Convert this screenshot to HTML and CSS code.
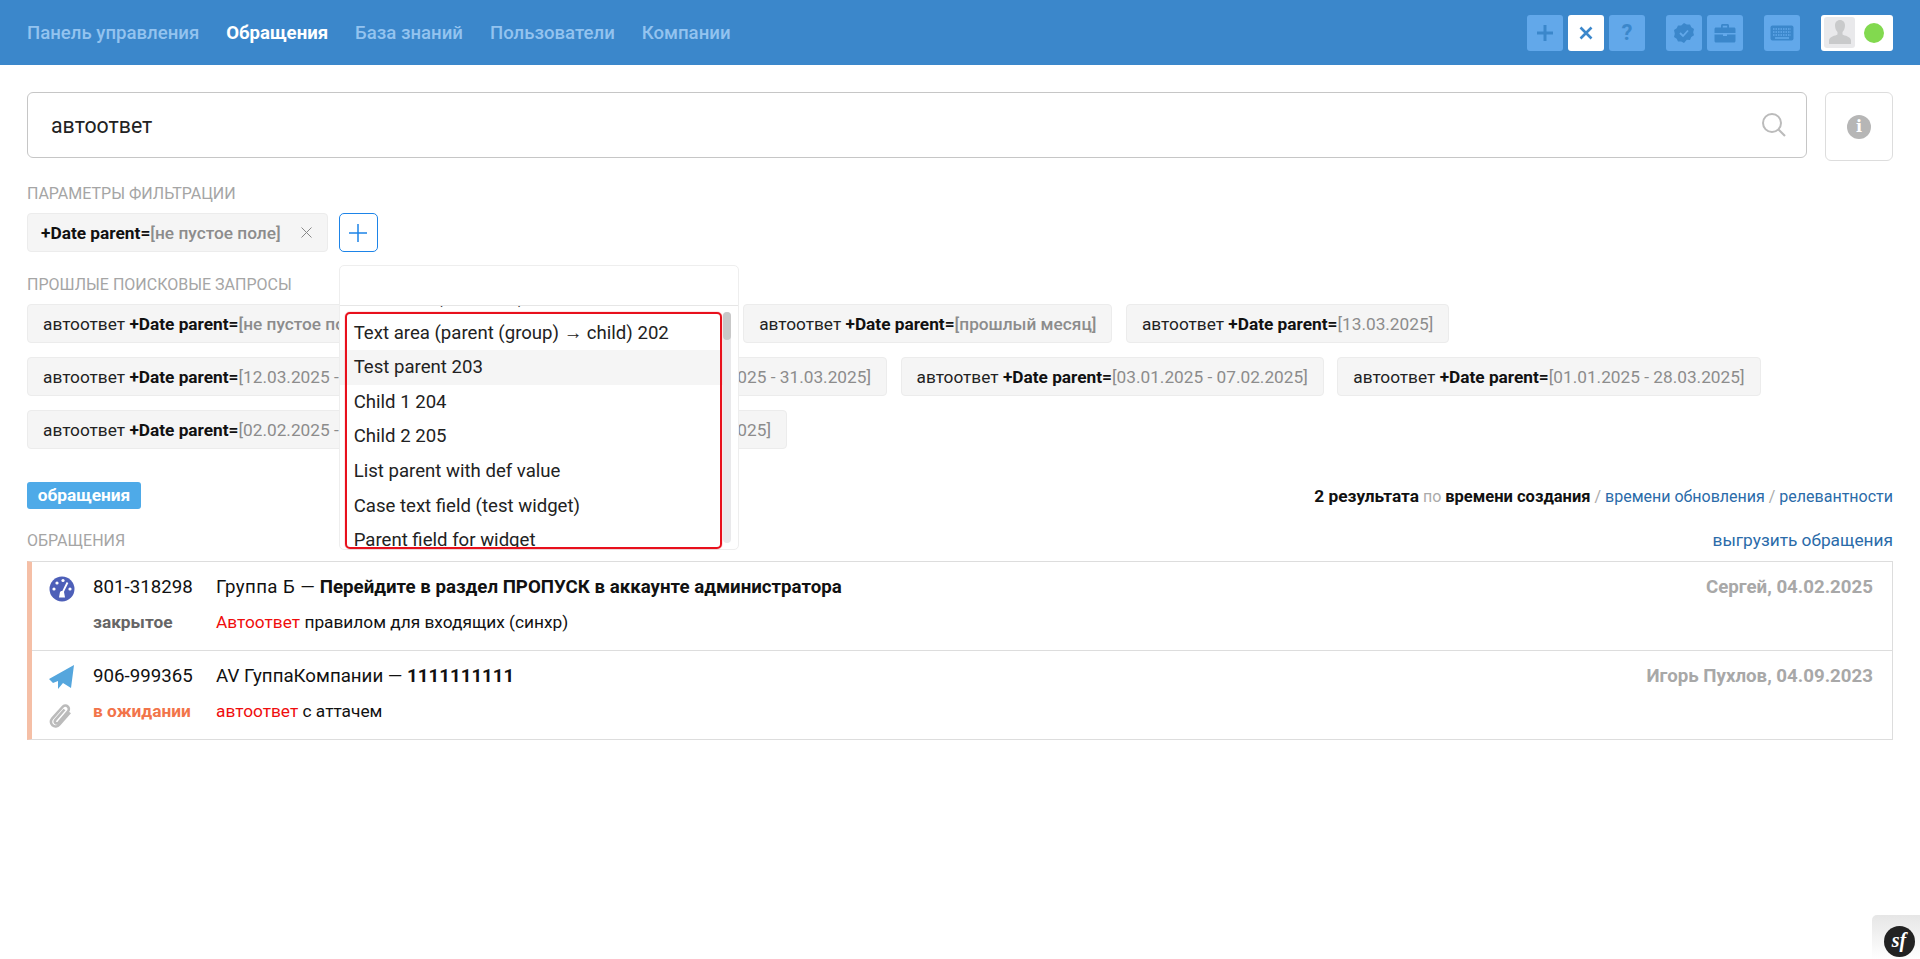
FILE: index.html
```html
<!DOCTYPE html>
<html lang="ru">
<head>
<meta charset="utf-8">
<title>Обращения</title>
<link rel="stylesheet" href="styles.css">
</head>
<body>
<header class="topbar">
  <nav class="nav">
    <a class="nav-link">Панель управления</a>
    <a class="nav-link active">Обращения</a>
    <a class="nav-link">База знаний</a>
    <a class="nav-link">Пользователи</a>
    <a class="nav-link">Компании</a>
  </nav>
  <div class="tools">
    <div class="tool-group">
      <span class="tool"><svg width="18" height="18" viewBox="0 0 18 18"><path d="M9 1v16M1 9h16" stroke="#3b87cb" stroke-width="3"/></svg></span>
      <span class="tool tool-on"><svg width="14" height="14" viewBox="0 0 14 14"><path d="M1.5 1.500l11 11M12.500 1.500l-11 11" stroke="#3b87cb" stroke-width="2.600"/></svg></span>
      <span class="tool tool-q">?</span>
    </div>
    <div class="tool-group">
      <span class="tool"><svg width="22" height="22" viewBox="0 0 22 22"><path d="M11 1l2.800 1.600 3.200-.2 1.300 2.900 2.700 1.800-.8 3.100.8 3.100-2.700 1.800-1.300 2.900-3.200-.2L11 21l-2.800-1.600-3.200.2-1.300-2.900L1 14.900l.8-3.100L1 8.100l2.700-1.800L5 3.400l3.200.2z" fill="#3b87cb"/><path d="M7 11l3 3 5-5.500" fill="none" stroke="#62a8ea" stroke-width="1.800"/></svg></span>
      <span class="tool"><svg width="22" height="20" viewBox="0 0 22 20"><path d="M7 5V2.500C7 1.700 7.700 1 8.500 1h5c.8 0 1.500.7 1.500 1.500V5h-1.800V2.800H8.800V5z" fill="#3b87cb"/><path d="M2 4.500h18c.8 0 1.500.7 1.500 1.500v4h-21V6c0-.8.7-1.500 1.500-1.500zM.5 11.500H9V13h4v-1.500h8.500V18c0 .8-.7 1.500-1.500 1.500H2c-.8 0-1.500-.7-1.500-1.500z" fill="#3b87cb"/></svg></span>
    </div>
    <div class="tool-group">
      <span class="tool"><svg width="24" height="16" viewBox="0 0 24 16"><rect x="0.500" y="0.500" width="23" height="15" rx="2" fill="#3b87cb"/><path d="M3 4h18M3 7h18M3 10h18" stroke="#62a8ea" stroke-width="1.500" stroke-dasharray="1.500 1"/><path d="M5 13h14" stroke="#62a8ea" stroke-width="1.500"/></svg></span>
    </div>
    <div class="profile">
      <span class="avatar"><svg width="22" height="26" viewBox="0 0 22 26"><path d="M11 1c3 0 5 2.300 5 5.500 0 2.500-1 5-2.500 6.500v2.500c2 1.200 8.500 2 8.500 6V25H0v-3.500c0-4 6.500-4.800 8.500-6V13C7 11.500 6 9 6 6.500 6 3.300 8 1 11 1z" fill="#c9cacb"/></svg></span>
      <span class="status"></span>
    </div>
  </div>
</header>

<main class="page">
  <section class="search-row">
    <div class="search">
      <span class="search-text">автоответ</span>
      <svg width="26" height="26" viewBox="0 0 26 26"><circle cx="11" cy="11" r="9" fill="none" stroke="#bbb" stroke-width="2"/><path d="M17.500 17.500l6.500 6.500" stroke="#bbb" stroke-width="2.200"/></svg>
    </div>
    <div class="info-box"><span class="info-icon">i</span></div>
  </section>

  <h2 class="label">Параметры фильтрации</h2>
  <section class="filter-row">
    <div class="chip chip-filter"><b>+Date parent=</b><span class="muted-bold">[не пустое поле]</span>
      <svg class="chip-x" width="11" height="11" viewBox="0 0 11 11"><path d="M.500.500l10 10M10.500.500l-10 10" stroke="#888" stroke-width="1"/></svg>
    </div>
    <div class="add-wrap">
      <button class="add-btn"><svg width="18" height="18" viewBox="0 0 18 18"><path d="M9 0v18M0 9h18" stroke="#1d84e8" stroke-width="1.500"/></svg></button>
      <div class="dropdown">
        <div class="dd-search"></div>
        <div class="dd-body">
          <ul class="dd-list">
            <li class="dd-item dd-prev">Date field (child text) 201</li>
            <li class="dd-item">Text area (parent (group) → child) 202</li>
            <li class="dd-item dd-hover">Test parent 203</li>
            <li class="dd-item">Child 1 204</li>
            <li class="dd-item">Child 2 205</li>
            <li class="dd-item">List parent with def value</li>
            <li class="dd-item">Case text field (test widget)</li>
            <li class="dd-item">Parent field for widget</li>
          </ul>
          <div class="dd-track"><div class="dd-thumb"></div></div>
        </div>
        <div class="annotation"></div>
      </div>
    </div>
  </section>

  <h2 class="label">Прошлые поисковые запросы</h2>
  <section class="history">
    <div class="chip">автоответ <b>+Date parent=</b><span class="muted-bold">[не пустое поле]</span></div>
    <div class="chip">автоответ <b>+Date parent=</b><span class="muted-bold">[этот месяц] </span></div>
    <div class="chip">автоответ <b>+Date parent=</b><span class="muted-bold">[прошлый месяц]</span></div>
    <div class="chip">автоответ <b>+Date parent=</b><span class="muted">[13.03.2025]</span></div>
    <div class="chip">автоответ <b>+Date parent=</b><span class="muted">[12.03.2025 - 13.03.2025]</span></div>
    <div class="chip">автоответ <b>+Date parent=</b><span class="muted">[01.03.2025 - 31.03.2025]</span></div>
    <div class="chip">автоответ <b>+Date parent=</b><span class="muted">[03.01.2025 - 07.02.2025]</span></div>
    <div class="chip">автоответ <b>+Date parent=</b><span class="muted">[01.01.2025 - 28.03.2025]</span></div>
    <div class="chip">автоответ <b>+Date parent=</b><span class="muted">[02.02.2025 - 28.02.2025]</span></div>
    <div class="chip">автоответ <b>+Date parent=</b><span class="muted">[02.01.2025]</span></div>
  </section>

  <section class="result-bar">
    <span class="tag">обращения</span>
    <p class="sort"><b class="sort-count">2 результата</b> <span class="sort-light">по</span> <b>времени создания</b> <span class="sort-light">/</span> <a>времени обновления</a> <span class="sort-light">/</span> <a>релевантности</a></p>
  </section>

  <section class="list-head">
    <h2 class="label label-flat">Обращения</h2>
    <a class="export">выгрузить обращения</a>
  </section>

  <section class="cases">
    <article class="case">
      <div class="case-icons">
        <svg width="26" height="26" viewBox="0 0 26 26"><circle cx="13" cy="13" r="12.500" fill="#4d5fb8"/><g fill="#fff"><circle cx="5" cy="13" r="1.600"/><circle cx="8" cy="7" r="1.600"/><circle cx="14" cy="4.500" r="1.600"/><circle cx="21" cy="13" r="1.600"/></g><path d="M18.500 6.500L13.800 16" stroke="#fff" stroke-width="1.800"/><path d="M10 21.500l1-5.500c.5-1.500 3.500-1.500 4 0l1 5.500z" fill="#fff"/></svg>
      </div>
      <div class="case-main">
        <div class="case-line">
          <span class="case-no">801-318298</span>
          <span class="case-title"><span class="case-group">Группа Б —</span> <b>Перейдите в раздел ПРОПУСК в аккаунте администратора</b></span>
          <span class="case-meta">Сергей, 04.02.2025</span>
        </div>
        <div class="case-line case-sub">
          <span class="case-no state-closed">закрытое</span>
          <span class="case-title"><em class="hit">Автоответ</em> правилом для входящих (синхр)</span>
        </div>
      </div>
    </article>
    <article class="case">
      <div class="case-icons">
        <svg width="26" height="25" viewBox="0 0 26 25"><path d="M25 0L0 14l4 4 5-2v8l5-6 8 5z" fill="#55a6dd"/></svg>
        <svg width="24" height="25" viewBox="0 0 24 25"><path d="M21 8.500L10.500 20.500c-2 2.300-5 2.500-7 .8s-2.200-4.700-.2-7L13.500 3c1.500-1.700 3.700-1.900 5.200-.6s1.600 3.500.1 5.200L9.500 18.500c-.9 1-2.200 1.100-3.100.4s-.9-2.100 0-3.100L15.500 5.500" fill="none" stroke="#bbb" stroke-width="2.600"/></svg>
      </div>
      <div class="case-main">
        <div class="case-line">
          <span class="case-no">906-999365</span>
          <span class="case-title">AV ГуппаКомпании — <b>1111111111</b></span>
          <span class="case-meta">Игорь Пухлов, 04.09.2023</span>
        </div>
        <div class="case-line case-sub">
          <span class="case-no state-wait">в ожидании</span>
          <span class="case-title"><em class="hit">автоответ</em> с аттачем</span>
        </div>
      </div>
    </article>
  </section>
</main>

<aside class="sf-toolbar"><span class="sf-logo">sf</span></aside>
</body>
</html>
```
FILE: styles.css
```css
* { box-sizing: border-box; }
html, body { margin: 0; height: 100%; }
body { font-family: Roboto, "Noto Sans", sans-serif; color: #111; background: #fff; overflow: hidden; position: relative; font-size: 16px; }
b { font-weight: 700; }
ul { margin: 0; padding: 0; list-style: none; }
p, h2 { margin: 0; }

.topbar { height: 65px; background: #3b87cb; display: flex; align-items: center; justify-content: space-between; padding: 0 27px; }
.nav { display: flex; gap: 27px; }
.nav-link { font-size: 18.600px; font-weight: 500; color: #93c3ef; }
.nav-link.active { color: #fff; font-weight: 700; }
.tools { display: flex; gap: 21px; }
.tool-group { display: flex; gap: 5px; }
.tool { width: 36px; height: 36px; background: #62a8ea; border-radius: 3px; display: flex; align-items: center; justify-content: center; }
.tool-on { background: #fff; }
.tool-q { color: #3b87cb; font-size: 22px; font-weight: 700; }
.profile { width: 72px; height: 36px; background: #fff; border-radius: 3px; display: flex; align-items: center; padding: 2px 9px 2px 3px; justify-content: space-between; }
.avatar { width: 31px; height: 31px; background: #e9e9eb; border-radius: 3px; display: flex; align-items: flex-end; justify-content: center; padding-bottom: 3px; }
.status { width: 20px; height: 20px; background: #82d94f; border-radius: 50%; }

.page { padding: 27px 27px 0; }
.search-row { display: flex; gap: 18px; align-items: flex-start; }
.search { flex: 1; height: 66px; border: 1px solid #c6c6c6; border-radius: 6px; display: flex; align-items: center; justify-content: space-between; padding: 0 19px 0 23px; }
.search-text { font-size: 21.300px; color: #222; }
.info-box { width: 68px; height: 69px; border: 1px solid #ddd; border-radius: 6px; display: flex; align-items: center; justify-content: center; }
.info-icon { width: 24px; height: 24px; border-radius: 50%; background: #b6b6b6; color: #fff; font: 700 16px/24px "DejaVu Serif", serif; text-align: center; }

.label { font-size: 16px; font-weight: 400; line-height: 20px; color: #a5a5a5; text-transform: uppercase; margin: 23px 0 9px; }
.label-flat { margin: 0; padding-top: 2px; }

.chip { height: 39px; background: #f5f5f5; border: 1px solid #ececec; border-radius: 4px; padding: 0 15px; display: flex; align-items: center; white-space: pre; font-size: 17.250px; color: #222; }
.chip b { color: #111; }
.muted { color: #8c8c8c; }
.muted-bold { color: #8c8c8c; font-weight: 500; }

.filter-row { display: flex; gap: 11px; }
.chip-filter { padding: 0 15px 0 13px; font-size: 17.300px; }
.chip-x { margin-left: 20px; }
.add-wrap { position: relative; }
.add-btn { width: 39px; height: 39px; background: #fff; border: 1px solid #1d84e8; border-radius: 5px; padding: 0; display: flex; align-items: center; justify-content: center; }

.dropdown { position: absolute; left: 0; top: 52px; width: 400px; height: 285px; background: #fff; border: 1px solid #eee; border-radius: 5px; z-index: 5; }
.dd-search { height: 40px; border-bottom: 1px solid #e6e6e6; }
.dd-body { display: flex; height: 243px; overflow: hidden; }
.dd-list { flex: 1; margin-top: -27px; padding-top: 2px; }
.dd-item { height: 34.600px; line-height: 34.600px; padding-left: 14px; font-size: 18.600px; color: #222; white-space: nowrap; }
.dd-prev { line-height: 32px; }
.dd-hover { background: #f5f5f5; }
.dd-track { width: 8px; margin: 6px 7px 6px 0; background: #e9e9eb; border-radius: 4px; }
.dd-thumb { height: 28px; background: #c8c8c8; border-radius: 4px; }
.annotation { position: absolute; left: 5px; top: 46px; width: 377px; height: 237px; border: 2px solid #e8101c; border-radius: 5px; box-shadow: 0 0 1px #e8101c; pointer-events: none; }

.history { display: flex; flex-wrap: wrap; }
.history .chip { margin: 0 13.500px 14px 0; }

.result-bar { display: flex; justify-content: space-between; align-items: center; margin-top: 19px; height: 27px; }
.tag { background: #4eaae8; color: #fff; font-weight: 700; font-size: 17.300px; height: 27px; line-height: 27px; width: 114px; text-align: center; border-radius: 3px; }
.sort { font-size: 16px; }
.sort b { font-size: 16.500px; }
.sort .sort-count { font-size: 17.300px; }
.sort a, .export { color: #2a6ba9; }
.sort-light { color: #aaa; }
.list-head { display: flex; justify-content: space-between; align-items: center; margin-top: 21px; height: 20px; }
.export { font-size: 17.300px; }

.cases { margin-top: 11px; border: 1px solid #ddd; border-left: 5px solid #f5bfa6; }
.case { display: flex; height: 89px; border-bottom: 1px solid #ddd; padding: 13px 19px 0 17px; }
.case:last-child { border-bottom: 0; height: 88px; }
.case-icons { width: 26px; margin-right: 18px; display: flex; flex-direction: column; gap: 14px; flex: none; padding-top: 1px; }
.case-main { flex: 1; }
.case-line { display: flex; font-size: 18.700px; line-height: 24px; }
.case-sub { font-size: 17.300px; margin-top: 10.500px; }
.case-no { width: 123px; flex: none; }
.case-title { flex: 1; }
.case-group { letter-spacing: .4px; }
.case-meta { color: #a8a8a8; font-weight: 700; }
.state-closed { color: #666; font-weight: 700; }
.state-wait { color: #f2744a; font-weight: 700; }
.hit { color: #ef0d0d; font-style: normal; }

.sf-toolbar { position: absolute; right: 0; bottom: 0; width: 48px; height: 44px; background: linear-gradient(to bottom, #e6e6e6, #fff); border-top-left-radius: 5px; display: flex; align-items: center; justify-content: center; padding: 8px 0 0 6px; }
.sf-logo { width: 31px; height: 31px; border-radius: 50%; background: #222; color: #fff; font: italic 700 20px/28px "Liberation Serif", serif; text-align: center; }
```
